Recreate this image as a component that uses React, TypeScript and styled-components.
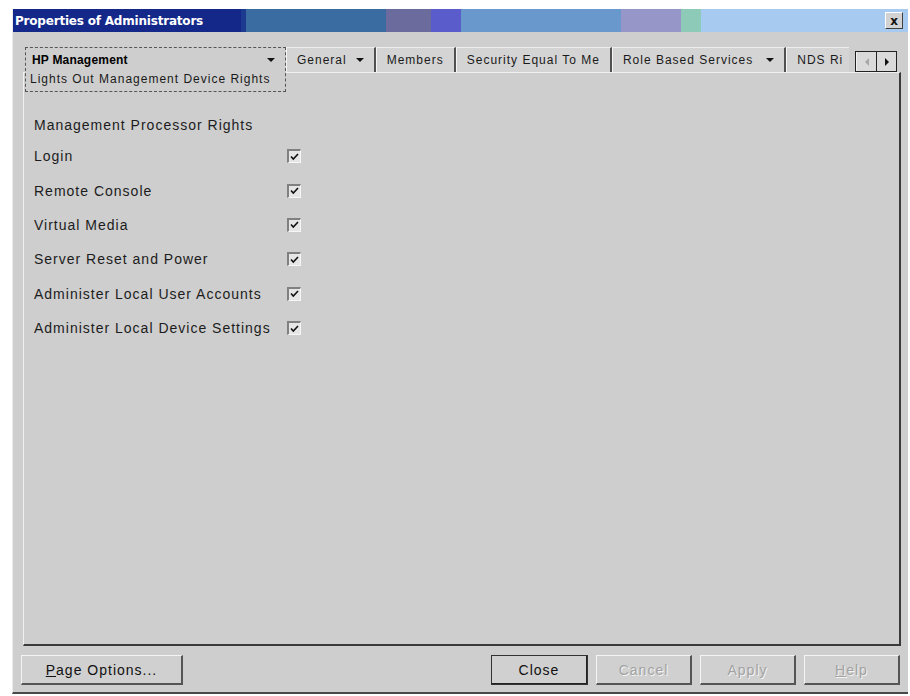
import React from 'react';
import styled, { createGlobalStyle } from 'styled-components';

const GlobalStyle = createGlobalStyle`
  html, body {
    margin: 0;
    padding: 0;
    background: #ffffff;
  }
  body {
    font-family: "Liberation Sans", Arial, sans-serif;
  }
`;

const Window = styled.div`
  box-sizing: border-box;
  margin: 9px 0 0 12px;
  width: 896px;
  height: 685px;
  display: flex;
  flex-direction: column;
  background: #cecece;
  border-left: 1px solid #ececec;
  border-bottom: 2px solid #4a4a4a;
`;

const TitleBar = styled.div`
  height: 23px;
  flex: none;
  display: flex;
  align-items: center;
  justify-content: space-between;
  padding: 0 5px 0 2px;
  background: linear-gradient(
    to right,
    #14288a 0 228px,
    #1c3a90 228px 233px,
    #3a6ca2 233px 373px,
    #6b6b9e 373px 418px,
    #5a5ccc 418px 448px,
    #6898cc 448px 608px,
    #9696c8 608px 668px,
    #8ecab8 668px 688px,
    #a6caf0 688px
  );
`;

const Title = styled.span`
  font-family: "DejaVu Sans", Verdana, sans-serif;
  font-weight: bold;
  font-size: 12px;
  color: #ffffff;
  letter-spacing: -0.2px;
`;

const CloseBox = styled.span`
  width: 18px;
  height: 17px;
  box-sizing: border-box;
  display: flex;
  align-items: center;
  justify-content: center;
  background: #d2d2d2;
  border-top: 1px solid #ffffff;
  border-left: 1px solid #ffffff;
  border-right: 1px solid #404040;
  border-bottom: 1px solid #404040;
  font-family: "DejaVu Sans", sans-serif;
  font-weight: bold;
  font-size: 12px;
  color: #111;
  line-height: 1;
`;

const Body = styled.div`
  flex: 1;
  display: flex;
  flex-direction: column;
  padding: 15px 7px 0 10px;
  min-height: 0;
`;

const TabStrip = styled.div`
  height: 25px;
  flex: none;
  display: flex;
  align-items: flex-start;
  padding-left: 2px;
  font-size: 12px;
  letter-spacing: 1px;
  color: #1a1a1a;
`;

const Tab = styled.div<{ $gap?: number }>`
  height: 25px;
  box-sizing: border-box;
  display: flex;
  align-items: center;
  gap: ${(p) => p.$gap ?? 8}px;
  padding: 0 10px 0 10px;
  white-space: nowrap;
  background: #d4d4d4;
  border-left: 1px solid #f4f4f4;
  border-right: 2px solid #505050;
  border-top: 1px solid #eeeeee;
`;

const ClippedTab = styled(Tab)`
  flex: 1;
  border-right: none;
  padding-right: 0;
`;

const SelectedTab = styled.div`
  position: relative;
  z-index: 1;
  width: 261px;
  height: 45px;
  box-sizing: border-box;
  display: flex;
  flex-direction: column;
  justify-content: center;
  gap: 5px;
  padding: 0 4px 0 4px;
  background: #cecece;
  border: 1px dashed #555555;
  white-space: nowrap;
`;

const TabHead = styled.div`
  display: flex;
  align-items: center;
  justify-content: space-between;
  padding: 0 6px 0 2px;
  font-weight: bold;
  letter-spacing: 0.2px;
  color: #000;
`;

const Arrow = styled.span`
  display: inline-block;
  width: 0;
  height: 0;
  border-left: 4px solid transparent;
  border-right: 4px solid transparent;
  border-top: 4px solid #111;
`;

const Scroller = styled.div`
  margin: 4px 4px 0 6px;
  display: flex;
  border: 1px solid #222;
  height: 21px;
  box-sizing: border-box;
`;

const ScrollButton = styled.span<{ $disabled?: boolean }>`
  width: 19px;
  display: flex;
  align-items: center;
  justify-content: center;
  background: #dadada;
  border-left: 1px solid #f2f2f2;
  & + & {
    border-left: 1px solid #222;
  }
  &::after {
    content: '';
    width: 0;
    height: 0;
    border-top: 4px solid transparent;
    border-bottom: 4px solid transparent;
    ${(p) =>
      p.$disabled
        ? 'border-right: 4px solid #a8a8a8;'
        : 'border-left: 4px solid #111;'}
  }
`;

const Panel = styled.div`
  flex: 1;
  box-sizing: border-box;
  border-top: 1px solid #f0f0f0;
  border-left: 1px solid #f0f0f0;
  border-right: 2px solid #3a3a3a;
  border-bottom: 2px solid #3a3a3a;
  padding: 44px 0 0 10px;
`;

const Heading = styled.div`
  font-size: 14px;
  line-height: 16px;
  letter-spacing: 1px;
  color: #1c1c1c;
  margin-bottom: 6px;
`;

const RightsGrid = styled.div`
  display: grid;
  grid-template-columns: 253px 14px;
  grid-auto-rows: 34.4px;
  align-items: center;
  font-size: 14px;
  letter-spacing: 1px;
  color: #1c1c1c;
`;

const CheckBox = styled.span`
  width: 14px;
  height: 14px;
  box-sizing: border-box;
  display: flex;
  align-items: center;
  justify-content: center;
  background: #e6e6e6;
  border-top: 2px solid #808080;
  border-left: 2px solid #808080;
  border-right: 1px solid #f6f6f6;
  border-bottom: 1px solid #f6f6f6;
`;

const Footer = styled.div`
  flex: none;
  display: flex;
  gap: 8px;
  padding: 9px 8px 7px 8px;
`;

const Button = styled.button<{ $width: number; $default?: boolean }>`
  width: ${(p) => p.$width}px;
  height: 30px;
  box-sizing: border-box;
  background: #d0d0d0;
  font-family: "Liberation Sans", Arial, sans-serif;
  font-size: 14px;
  letter-spacing: 1px;
  color: ${(p) => (p.disabled ? '#a2a2a2' : '#111')};
  text-shadow: ${(p) => (p.disabled ? '1px 1px 0 #f4f4f4' : 'none')};
  border-top: 1px solid #f4f4f4;
  border-left: 1px solid #f4f4f4;
  border-right: 2px solid ${(p) => (p.$default ? '#222' : '#555')};
  border-bottom: 2px solid ${(p) => (p.$default ? '#222' : '#555')};
  outline: ${(p) => (p.$default ? '1px solid #333' : 'none')};
  outline-offset: -1px;
  padding: 0;
  &:disabled {
    cursor: default;
  }
`;

const Spacer = styled.div`
  flex: 1;
`;

const Mnemonic = styled.span`
  text-decoration: underline;
`;

const rights = [
  'Login',
  'Remote Console',
  'Virtual Media',
  'Server Reset and Power',
  'Administer Local User Accounts',
  'Administer Local Device Settings',
];

function Check() {
  return (
    <CheckBox>
      <svg width="9" height="8" viewBox="0 0 9 8">
        <polyline
          points="1,3.5 3.3,6 8,1"
          fill="none"
          stroke="#111"
          strokeWidth="1.6"
        />
      </svg>
    </CheckBox>
  );
}

export default function App() {
  return (
    <>
      <GlobalStyle />
      <Window>
        <TitleBar>
          <Title>Properties of Administrators</Title>
          <CloseBox>x</CloseBox>
        </TitleBar>
        <Body>
          <TabStrip>
            <SelectedTab>
              <TabHead>
                <span>HP Management</span>
                <Arrow />
              </TabHead>
              <div>Lights Out Management Device Rights</div>
            </SelectedTab>
            <Tab $gap={9}>
              General <Arrow />
            </Tab>
            <Tab>Members</Tab>
            <Tab>Security Equal To Me</Tab>
            <Tab $gap={13}>
              Role Based Services <Arrow />
            </Tab>
            <ClippedTab>NDS Ri</ClippedTab>
            <Scroller>
              <ScrollButton $disabled />
              <ScrollButton />
            </Scroller>
          </TabStrip>
          <Panel>
            <Heading>Management Processor Rights</Heading>
            <RightsGrid>
              {rights.map((r) => (
                <React.Fragment key={r}>
                  <span>{r}</span>
                  <Check />
                </React.Fragment>
              ))}
            </RightsGrid>
          </Panel>
        </Body>
        <Footer>
          <Button $width={162}>
            <Mnemonic>P</Mnemonic>age Options...
          </Button>
          <Spacer />
          <Button $width={97} $default>
            Close
          </Button>
          <Button $width={96} disabled>
            Cancel
          </Button>
          <Button $width={96} disabled>
            Apply
          </Button>
          <Button $width={96} disabled>
            <Mnemonic>H</Mnemonic>elp
          </Button>
        </Footer>
      </Window>
    </>
  );
}
